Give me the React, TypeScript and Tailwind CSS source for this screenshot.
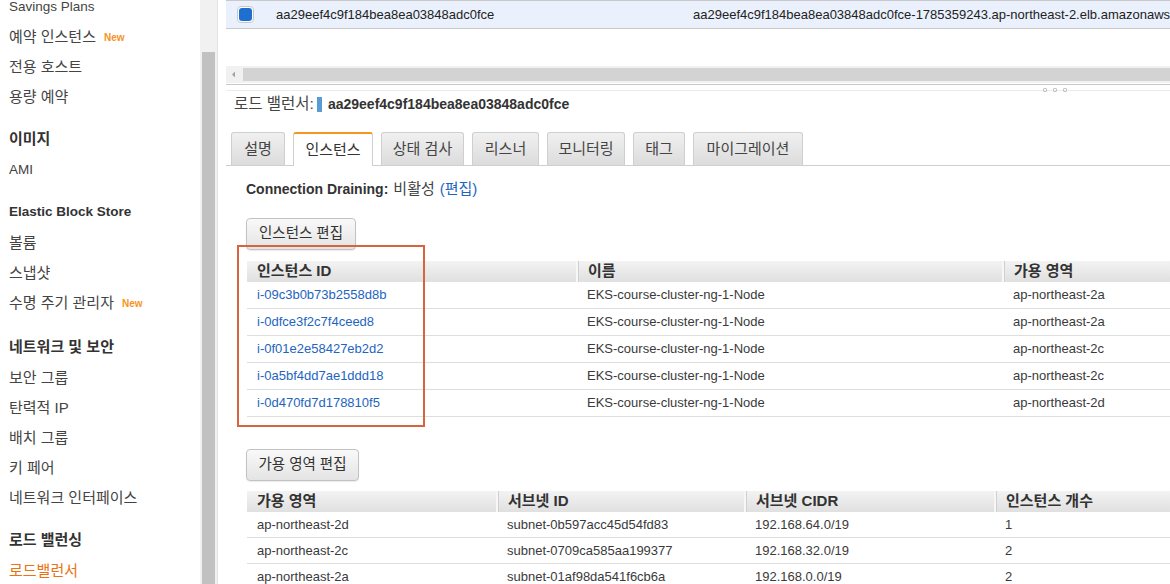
import React from "react";

const FONT = "font-['Liberation_Sans','Noto_Sans_CJK_KR',sans-serif]";

type NavItem = { label: string; heading?: boolean; isNew?: boolean; active?: boolean; latin?: boolean; mt?: string };

const NAV: NavItem[] = [
  { label: "Savings Plans", latin: true },
  { label: "예약 인스턴스", isNew: true },
  { label: "전용 호스트" },
  { label: "용량 예약" },
  { label: "이미지", heading: true, mt: "mt-[12px]" },
  { label: "AMI", latin: true },
  { label: "Elastic Block Store", heading: true, latin: true, mt: "mt-[12px]" },
  { label: "볼륨" },
  { label: "스냅샷" },
  { label: "수명 주기 관리자", isNew: true },
  { label: "네트워크 및 보안", heading: true, mt: "mt-[14px]" },
  { label: "보안 그룹" },
  { label: "탄력적 IP" },
  { label: "배치 그룹" },
  { label: "키 페어" },
  { label: "네트워크 인터페이스" },
  { label: "로드 밸런싱", heading: true, mt: "mt-[12px]" },
  { label: "로드밸런서", active: true },
];

const TABS = [
  { label: "설명", w: "w-[54px]" },
  { label: "인스턴스", w: "w-[80px]", active: true },
  { label: "상태 검사", w: "w-[83px]" },
  { label: "리스너", w: "w-[67px]" },
  { label: "모니터링", w: "w-[78px]" },
  { label: "태그", w: "w-[52px]" },
  { label: "마이그레이션", w: "w-[110px]" },
];

const INSTANCES = [
  { id: "i-09c3b0b73b2558d8b", name: "EKS-course-cluster-ng-1-Node", az: "ap-northeast-2a" },
  { id: "i-0dfce3f2c7f4ceed8", name: "EKS-course-cluster-ng-1-Node", az: "ap-northeast-2a" },
  { id: "i-0f01e2e58427eb2d2", name: "EKS-course-cluster-ng-1-Node", az: "ap-northeast-2c" },
  { id: "i-0a5bf4dd7ae1ddd18", name: "EKS-course-cluster-ng-1-Node", az: "ap-northeast-2c" },
  { id: "i-0d470fd7d178810f5", name: "EKS-course-cluster-ng-1-Node", az: "ap-northeast-2d" },
];

const ZONES = [
  { az: "ap-northeast-2d", subnet: "subnet-0b597acc45d54fd83", cidr: "192.168.64.0/19", count: "1" },
  { az: "ap-northeast-2c", subnet: "subnet-0709ca585aa199377", cidr: "192.168.32.0/19", count: "2" },
  { az: "ap-northeast-2a", subnet: "subnet-01af98da541f6cb6a", cidr: "192.168.0.0/19", count: "2" },
];

function Sidebar() {
  return (
    <div className="w-[200px] shrink-0 overflow-hidden bg-white">
      <div className="-mt-[8px] flex flex-col pl-[9px]">
        {NAV.map((item) => (
          <div
            key={item.label}
            className={`flex items-center gap-[8px] whitespace-nowrap ${item.heading ? "h-[31px] font-bold text-[#333]" : "h-[30px] text-[#444]"} ${item.mt ?? ""} ${item.active ? "text-[#ec7211]" : ""} ${item.latin ? "text-[13.5px]" : "text-[15px]"}`}
          >
            <span>{item.label}</span>
            {item.isNew && <span className="text-[10px] font-bold text-[#f7931e]">New</span>}
          </div>
        ))}
      </div>
    </div>
  );
}

function ScrollTrack() {
  return (
    <div className="flex shrink-0">
      <div className="w-[17px] bg-[#f1f1f1] px-[2px]">
        <div className="mt-[52px] h-[600px] bg-[#c1c1c1]" />
      </div>
      <div className="w-[1px] bg-[#e4e4e4]" />
      <div className="w-[8px] bg-white" />
    </div>
  );
}

function EditButton({ label, w }: { label: string; w: string }) {
  return (
    <button
      className={`${w} h-[32px] rounded-[4px] border border-[#c2c2c2] bg-gradient-to-b from-[#f9f9f9] to-[#e4e4e4] text-[14.5px] text-[#333] shadow-[0_1px_1px_rgba(0,0,0,0.08)]`}
    >
      {label}
    </button>
  );
}

function HeaderCell({ label, w, first }: { label: string; w: string; first?: boolean }) {
  return (
    <div
      className={`${w} shrink-0 flex items-center pl-[10px] text-[15px] font-bold text-[#333] ${first ? "" : "border-l-2 border-l-[#f7f7f7] shadow-[inset_1px_0_0_#d0d0d0]"}`}
    >
      {label}
    </div>
  );
}

export default function App() {
  return (
    <div className={`${FONT} flex h-[584px] w-[1170px] overflow-hidden bg-white text-[13px]`}>
      <Sidebar />
      <ScrollTrack />

      <div className="relative min-w-0 flex-1">
        {/* selected load balancer row */}
        <div className="flex h-[29px] items-center border-y border-[#c9c9c9] bg-[#eaf1fc] text-[#222]">
          <div className="ml-[11px] h-[17px] w-[17px] shrink-0 rounded-[4px] border border-[#c8c8c8] bg-white p-[1px]">
            <div className="h-full w-full rounded-[3px] bg-[#1f6fd0]" />
          </div>
          <span className="ml-[22px] w-[417px] shrink-0">aa29eef4c9f184bea8ea03848adc0fce</span>
          <span className="whitespace-nowrap">aa29eef4c9f184bea8ea03848adc0fce-1785359243.ap-northeast-2.elb.amazonaws.com</span>
        </div>

        {/* horizontal scrollbar */}
        <div className="mt-[37px] flex h-[17px] items-center bg-[#f1f1f1]">
          <svg width="17" height="17" viewBox="0 0 17 17" className="shrink-0">
            <path d="M6 8.5 L9 5.5 L9 11.5 Z" fill="#a3a3a3" />
          </svg>
          <div className="h-[13px] flex-1 bg-[#d3d3d3]" />
        </div>

        {/* split handle */}
        <div className="mt-[1px] h-[1px] bg-[#c8c8c8]" />
        <div className="relative h-[6px] border-b border-[#ececec]">
          <div className="absolute left-[817px] top-[3px] flex gap-[6px]">
            <span className="h-[4px] w-[4px] rounded-[1px] border border-[#c4c4c4]" />
            <span className="h-[4px] w-[4px] rounded-[1px] border border-[#c4c4c4]" />
            <span className="h-[4px] w-[4px] rounded-[1px] border border-[#c4c4c4]" />
          </div>
        </div>

        {/* title */}
        <div className="mt-[3px] flex h-[20px] items-center pl-[8px] text-[#444]">
          <span className="text-[15.5px]">로드 밸런서:</span>
          <span className="ml-[3px] h-[15px] w-[5px] bg-[#5b9bd5]" />
          <span className="ml-[6px] text-[14px] font-bold text-[#333]">aa29eef4c9f184bea8ea03848adc0fce</span>
        </div>

        {/* tabs */}
        <div className="mt-[18px] flex h-[34px] items-end gap-[8px] border-b border-[#cfcfcf] pl-[5px]">
          {TABS.map((t) =>
            t.active ? (
              <div
                key={t.label}
                className={`${t.w} -mb-[1px] flex h-[34px] items-center justify-center rounded-t-[3px] border-x border-t-2 border-x-[#cfcfcf] border-t-[#f7961d] bg-white text-[15px] text-[#333]`}
              >
                {t.label}
              </div>
            ) : (
              <div
                key={t.label}
                className={`${t.w} flex h-[33px] items-center justify-center rounded-t-[3px] border-x border-t border-[#cfcfcf] bg-gradient-to-b from-[#f0f0f0] to-[#dcdcdc] text-[15px] text-[#444]`}
              >
                {t.label}
              </div>
            )
          )}
        </div>

        <div className="pl-[20px]">
          <div className="mt-[13px] flex h-[20px] items-center text-[#444]">
            <span className="text-[14px] font-bold text-[#333]">Connection Draining:</span>
            <span className="ml-[5px] text-[15px]">비활성</span>
            <span className="ml-[5px] text-[15px] text-[#1e65bf]">(편집)</span>
          </div>

          <div className="mt-[19px]">
            <EditButton label="인스턴스 편집" w="w-[110px]" />
          </div>

          {/* instances table */}
          <div className="ml-[1px] mt-[11px] text-[#3a3a3a]">
            <div className="flex h-[21px] bg-gradient-to-b from-[#f3f3f3] to-[#e0e0e0]">
              <HeaderCell label="인스턴스 ID" w="w-[329px]" first />
              <HeaderCell label="이름" w="w-[426px]" />
              <HeaderCell label="가용 영역" w="w-[200px]" />
            </div>
            {INSTANCES.map((r) => (
              <div key={r.id} className="flex h-[27px] items-center border-b border-[#dedede]">
                <span className="w-[329px] shrink-0 pl-[10px] text-[#1e65bf]">{r.id}</span>
                <span className="w-[426px] shrink-0 pl-[11px]">{r.name}</span>
                <span className="pl-[11px]">{r.az}</span>
              </div>
            ))}
          </div>

          <div className="mt-[32px]">
            <EditButton label="가용 영역 편집" w="w-[113px]" />
          </div>

          {/* zones table */}
          <div className="ml-[1px] mt-[10px] text-[#3a3a3a]">
            <div className="flex h-[21px] bg-gradient-to-b from-[#f3f3f3] to-[#e0e0e0]">
              <HeaderCell label="가용 영역" w="w-[249px]" first />
              <HeaderCell label="서브넷 ID" w="w-[248px]" />
              <HeaderCell label="서브넷 CIDR" w="w-[250px]" />
              <HeaderCell label="인스턴스 개수" w="w-[200px]" />
            </div>
            {ZONES.map((r) => (
              <div key={r.az} className="flex h-[26px] items-center border-b border-[#dedede]">
                <span className="w-[249px] shrink-0 pl-[10px]">{r.az}</span>
                <span className="w-[248px] shrink-0 pl-[11px]">{r.subnet}</span>
                <span className="w-[250px] shrink-0 pl-[11px]">{r.cidr}</span>
                <span className="pl-[11px]">{r.count}</span>
              </div>
            ))}
          </div>
        </div>

        {/* annotation box */}
        <div className="pointer-events-none absolute left-[11px] top-[245px] h-[182px] w-[188px] border-2 border-[#d9623f]" />
      </div>
    </div>
  );
}
